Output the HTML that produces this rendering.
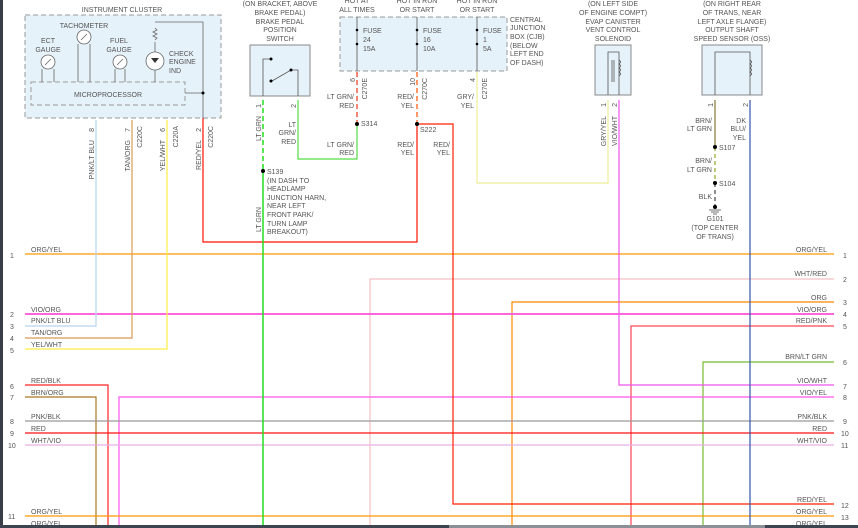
<!DOCTYPE html>
<html><head><meta charset="utf-8"><style>
html,body{margin:0;padding:0;background:#fff;width:858px;height:528px;overflow:hidden}
svg{display:block}
text{font-family:"Liberation Sans",sans-serif;font-size:7px;fill:#555}
</style></head><body>
<svg width="858" height="528" viewBox="0 0 858 528" xmlns="http://www.w3.org/2000/svg">
<rect x="0" y="0" width="3" height="528" fill="#3a3f47"/>
<rect x="25" y="15" width="196" height="103" fill="#e6f2fa" stroke="#999" stroke-dasharray="5,3"/>
<rect x="31" y="82" width="154" height="23" fill="#e6f2fa" stroke="#999" stroke-dasharray="5,3"/>
<text x="122" y="12" text-anchor="middle">INSTRUMENT CLUSTER</text>
<text x="108" y="97" text-anchor="middle">MICROPROCESSOR</text>
<text x="48" y="43" text-anchor="middle">ECT</text><text x="48" y="52" text-anchor="middle">GAUGE</text>
<text x="84" y="28" text-anchor="middle">TACHOMETER</text>
<text x="119" y="43" text-anchor="middle">FUEL</text><text x="119" y="52" text-anchor="middle">GAUGE</text>
<text x="169" y="56">CHECK</text><text x="169" y="64">ENGINE</text><text x="169" y="73">IND</text>
<g stroke="#666" fill="#fff" stroke-width="0.8">
<circle cx="48" cy="62" r="7"/><line x1="45" y1="65" x2="51" y2="59"/>
<circle cx="84" cy="37" r="7"/><line x1="81" y1="40" x2="87" y2="34"/>
<circle cx="120" cy="62" r="7"/><line x1="117" y1="65" x2="123" y2="59"/>
<circle cx="155" cy="61" r="9"/>
<path d="M42 69V82M54 69V82M78 44V82M90 44V82M115 69V82M125 69V82M155 70V82M155 52V42M155 22H203V118M185 93H203" fill="none"/>
<path d="M155 28l2 2l-4 2l4 2l-4 2l4 2l-2 2" fill="none"/>
</g>
<path d="M151 58h8l-4 5z" fill="#333"/>
<circle cx="203" cy="93" r="1.5" fill="#000"/>
<rect x="250" y="45" width="60" height="51" fill="#e6f2fa" stroke="#888"/>
<text x="280" y="6" text-anchor="middle">(ON BRACKET, ABOVE</text>
<text x="280" y="15" text-anchor="middle">BRAKE PEDAL)</text>
<text x="280" y="24" text-anchor="middle">BRAKE PEDAL</text>
<text x="280" y="32" text-anchor="middle">POSITION</text>
<text x="280" y="41" text-anchor="middle">SWITCH</text>
<path d="M263 96V59H271M272 81L291 70H298V96" stroke="#555" fill="none" stroke-width="0.8"/>
<circle cx="271" cy="59" r="1.5"/><circle cx="271" cy="81" r="1.5"/><circle cx="291" cy="70" r="1.5"/>
<rect x="340" y="17" width="167" height="54" fill="#e6f2fa" stroke="#999" stroke-dasharray="5,3"/>
<text x="357" y="3" text-anchor="middle">HOT AT</text><text x="357" y="12" text-anchor="middle">ALL TIMES</text>
<text x="417" y="3" text-anchor="middle">HOT IN RUN</text><text x="417" y="12" text-anchor="middle">OR START</text>
<text x="477" y="3" text-anchor="middle">HOT IN RUN</text><text x="477" y="12" text-anchor="middle">OR START</text>
<g stroke="#555" fill="none" stroke-width="0.8"><path d="M357 17V71M417 17V71M477 17V71"/></g>
<circle cx="357" cy="30" r="1.3"/><circle cx="357" cy="44" r="1.3"/><circle cx="417" cy="30" r="1.3"/><circle cx="417" cy="44" r="1.3"/><circle cx="477" cy="30" r="1.3"/><circle cx="477" cy="44" r="1.3"/>
<text x="363" y="33">FUSE</text><text x="363" y="42">24</text><text x="363" y="51">15A</text>
<text x="423" y="33">FUSE</text><text x="423" y="42">16</text><text x="423" y="51">10A</text>
<text x="483" y="33">FUSE</text><text x="483" y="42">1</text><text x="483" y="51">5A</text>
<text x="510" y="22">CENTRAL</text><text x="510" y="30">JUNCTION</text><text x="510" y="39">BOX (CJB)</text><text x="510" y="48">(BELOW</text><text x="510" y="56">LEFT END</text><text x="510" y="65">OF DASH)</text>
<rect x="595" y="45" width="36" height="50" fill="#e6f2fa" stroke="#888"/>
<text x="613" y="6" text-anchor="middle">(ON LEFT SIDE</text><text x="613" y="15" text-anchor="middle">OF ENGINE COMPT)</text><text x="613" y="24" text-anchor="middle">EVAP CANISTER</text><text x="613" y="32" text-anchor="middle">VENT CONTROL</text><text x="613" y="41" text-anchor="middle">SOLENOID</text>
<path d="M608 95V52H619V95M612 60V82M614 60V82M619 60q3 2 0 4q3 2 0 4q3 2 0 4q3 2 0 4" stroke="#555" fill="none" stroke-width="0.8"/>
<rect x="702" y="45" width="60" height="50" fill="#e6f2fa" stroke="#888"/>
<text x="732" y="6" text-anchor="middle">(ON RIGHT REAR</text><text x="732" y="15" text-anchor="middle">OF TRANS, NEAR</text><text x="732" y="24" text-anchor="middle">LEFT AXLE FLANGE)</text><text x="732" y="32" text-anchor="middle">OUTPUT SHAFT</text><text x="732" y="41" text-anchor="middle">SPEED SENSOR (OSS)</text>
<path d="M715 95V52H750V95M750 60q3 2 0 4q3 2 0 4q3 2 0 4q3 2 0 4" stroke="#555" fill="none" stroke-width="0.8"/>
<g fill="none" stroke-width="1.2">
<path d="M25 254H834" stroke="#ff9900"/>
<path d="M370 528V279H834" stroke="#f4c0c0"/>
<path d="M512 528V302H834" stroke="#ff8800"/>
<path d="M25 314H834" stroke="#ff66dd" stroke-width="2"/>
<path d="M631 528V326H834" stroke="#ff4455"/>
<path d="M96 120V326H25" stroke="#b8d4ec"/>
<path d="M132 120V338H25" stroke="#d89a55"/>
<path d="M167 120V349H25" stroke="#ffee44"/>
<path d="M703 528V362H834" stroke="#77bb33"/>
<path d="M619 100V385H834" stroke="#ee55ee"/>
<path d="M108 528V385H25" stroke="#ff2222"/>
<path d="M96 528V397H25" stroke="#aa7722"/>
<path d="M119 528V397H834" stroke="#ff55ee"/>
<path d="M25 421H834" stroke="#999"/>
<path d="M25 433H834" stroke="#ff1111"/>
<path d="M25 445H834" stroke="#e8b0e8"/>
<path d="M417 124H453V504H834" stroke="#ff2200"/>
<path d="M25 516H834" stroke="#ff9900"/>
<path d="M203 118V242H417V124" stroke="#ff1100"/>
<path d="M263 171V528" stroke="#22dd22" stroke-width="1.5"/>
<path d="M263 100V171" stroke="#22dd22" stroke-width="1.5" stroke-dasharray="5,3"/>
<path d="M417 72V124" stroke="#ff5500" stroke-dasharray="5,3"/>
<path d="M357 72V124" stroke="#ee3311" stroke-dasharray="5,3"/>
<path d="M357 124V159H298V100" stroke="#55dd44"/>
<path d="M477 72V183H608V100" stroke="#eeee99"/>
<path d="M750 100V528" stroke="#3355aa"/>
<path d="M715 100V147" stroke="#887733"/>
<path d="M715 147V183" stroke="#88aa22" stroke-dasharray="4,3"/>
<path d="M715 183V207" stroke="#444" stroke-dasharray="4,3"/>
</g>
<g fill="#000"><circle cx="263" cy="171" r="2"/><circle cx="357" cy="124" r="2"/><circle cx="417" cy="124" r="2"/><circle cx="715" cy="147" r="2"/><circle cx="715" cy="183" r="2"/><circle cx="715" cy="207" r="2"/></g>
<path d="M709 210h12M711 212h8M713 214h4" stroke="#444" stroke-width="0.8"/>
<g>
<text transform="translate(94,128) rotate(-90)" text-anchor="end">8</text>
<text transform="translate(94,140) rotate(-90)" text-anchor="end">PNK/LT BLU</text>
<text transform="translate(130,128) rotate(-90)" text-anchor="end">7</text>
<text transform="translate(130,140) rotate(-90)" text-anchor="end">TAN/ORG</text>
<text transform="translate(142,126) rotate(-90)" text-anchor="end">C220C</text>
<text transform="translate(165,128) rotate(-90)" text-anchor="end">6</text>
<text transform="translate(165,140) rotate(-90)" text-anchor="end">YEL/WHT</text>
<text transform="translate(178,126) rotate(-90)" text-anchor="end">C220A</text>
<text transform="translate(201,128) rotate(-90)" text-anchor="end">2</text>
<text transform="translate(201,140) rotate(-90)" text-anchor="end">RED/YEL</text>
<text transform="translate(213,126) rotate(-90)" text-anchor="end">C220C</text>
<text transform="translate(261,104) rotate(-90)" text-anchor="end">1</text>
<text transform="translate(261,116) rotate(-90)" text-anchor="end">LT GRN</text>
<text transform="translate(261,207) rotate(-90)" text-anchor="end">LT GRN</text>
<text transform="translate(296,104) rotate(-90)" text-anchor="end">2</text>
<text transform="translate(355,78) rotate(-90)" text-anchor="end">6</text>
<text transform="translate(367,78) rotate(-90)" text-anchor="end">C270E</text>
<text transform="translate(415,78) rotate(-90)" text-anchor="end">10</text>
<text transform="translate(427,78) rotate(-90)" text-anchor="end">C270C</text>
<text transform="translate(475,78) rotate(-90)" text-anchor="end">4</text>
<text transform="translate(487,78) rotate(-90)" text-anchor="end">C270E</text>
<text transform="translate(606,103) rotate(-90)" text-anchor="end">1</text>
<text transform="translate(606,116) rotate(-90)" text-anchor="end">GRY/YEL</text>
<text transform="translate(617,103) rotate(-90)" text-anchor="end">2</text>
<text transform="translate(617,116) rotate(-90)" text-anchor="end">VIO/WHT</text>
<text transform="translate(713,103) rotate(-90)" text-anchor="end">1</text>
<text transform="translate(748,103) rotate(-90)" text-anchor="end">2</text>
</g>
<text x="267" y="174">S139</text>
<text x="267" y="183">(IN DASH TO</text><text x="267" y="191">HEADLAMP</text><text x="267" y="200">JUNCTION HARN,</text><text x="267" y="208">NEAR LEFT</text><text x="267" y="217">FRONT PARK/</text><text x="267" y="226">TURN LAMP</text><text x="267" y="234">BREAKOUT)</text>
<text x="296" y="127" text-anchor="end">LT</text><text x="296" y="135" text-anchor="end">GRN/</text><text x="296" y="144" text-anchor="end">RED</text>
<text x="354" y="99" text-anchor="end">LT GRN/</text><text x="354" y="108" text-anchor="end">RED</text>
<text x="361" y="126">S314</text>
<text x="354" y="147" text-anchor="end">LT GRN/</text><text x="354" y="155" text-anchor="end">RED</text>
<text x="414" y="99" text-anchor="end">RED/</text><text x="414" y="108" text-anchor="end">YEL</text>
<text x="420" y="132">S222</text>
<text x="414" y="147" text-anchor="end">RED/</text><text x="414" y="155" text-anchor="end">YEL</text>
<text x="450" y="147" text-anchor="end">RED/</text><text x="450" y="155" text-anchor="end">YEL</text>
<text x="474" y="99" text-anchor="end">GRY/</text><text x="474" y="108" text-anchor="end">YEL</text>
<text x="712" y="123" text-anchor="end">BRN/</text><text x="712" y="131" text-anchor="end">LT GRN</text>
<text x="746" y="123" text-anchor="end">DK</text><text x="746" y="131" text-anchor="end">BLU/</text><text x="746" y="140" text-anchor="end">YEL</text>
<text x="719" y="150">S107</text>
<text x="712" y="163" text-anchor="end">BRN/</text><text x="712" y="172" text-anchor="end">LT GRN</text>
<text x="719" y="186">S104</text>
<text x="712" y="199" text-anchor="end">BLK</text>
<text x="715" y="221" text-anchor="middle">G101</text><text x="715" y="230" text-anchor="middle">(TOP CENTER</text><text x="715" y="239" text-anchor="middle">OF TRANS)</text>
<g>
<text x="31" y="252">ORG/YEL</text><text x="10" y="258">1</text>
<text x="31" y="312">VIO/ORG</text><text x="10" y="317">2</text>
<text x="31" y="323">PNK/LT BLU</text><text x="10" y="329">3</text>
<text x="31" y="335">TAN/ORG</text><text x="10" y="341">4</text>
<text x="31" y="347">YEL/WHT</text><text x="10" y="353">5</text>
<text x="31" y="383">RED/BLK</text><text x="10" y="389">6</text>
<text x="31" y="395">BRN/ORG</text><text x="10" y="400">7</text>
<text x="31" y="419">PNK/BLK</text><text x="10" y="424">8</text>
<text x="31" y="431">RED</text><text x="10" y="436">9</text>
<text x="31" y="443">WHT/VIO</text><text x="8" y="448">10</text>
<text x="31" y="514">ORG/YEL</text><text x="8" y="519">11</text>
<text x="31" y="526">ORG/YEL</text>
</g>
<g text-anchor="end">
<text x="827" y="252">ORG/YEL</text>
<text x="827" y="276">WHT/RED</text>
<text x="827" y="300">ORG</text>
<text x="827" y="312">VIO/ORG</text>
<text x="827" y="323">RED/PNK</text>
<text x="827" y="359">BRN/LT GRN</text>
<text x="827" y="383">VIO/WHT</text>
<text x="827" y="395">VIO/YEL</text>
<text x="827" y="419">PNK/BLK</text>
<text x="827" y="431">RED</text>
<text x="827" y="443">WHT/VIO</text>
<text x="827" y="502">RED/YEL</text>
<text x="827" y="514">ORG/YEL</text>
<text x="827" y="526">ORG/YEL</text>
</g>
<g>
<text x="843" y="258">1</text><text x="843" y="282">2</text><text x="843" y="305">3</text><text x="843" y="317">4</text><text x="843" y="329">5</text><text x="843" y="365">6</text><text x="843" y="389">7</text><text x="843" y="400">8</text><text x="843" y="424">9</text><text x="841" y="436">10</text><text x="841" y="448">11</text><text x="841" y="508">12</text><text x="841" y="520">13</text>
</g>
<rect x="0" y="525" width="858" height="3" fill="#3c4450"/>
<rect x="449" y="525" width="316" height="3" fill="#8a9096"/>
</svg>
</body></html>
